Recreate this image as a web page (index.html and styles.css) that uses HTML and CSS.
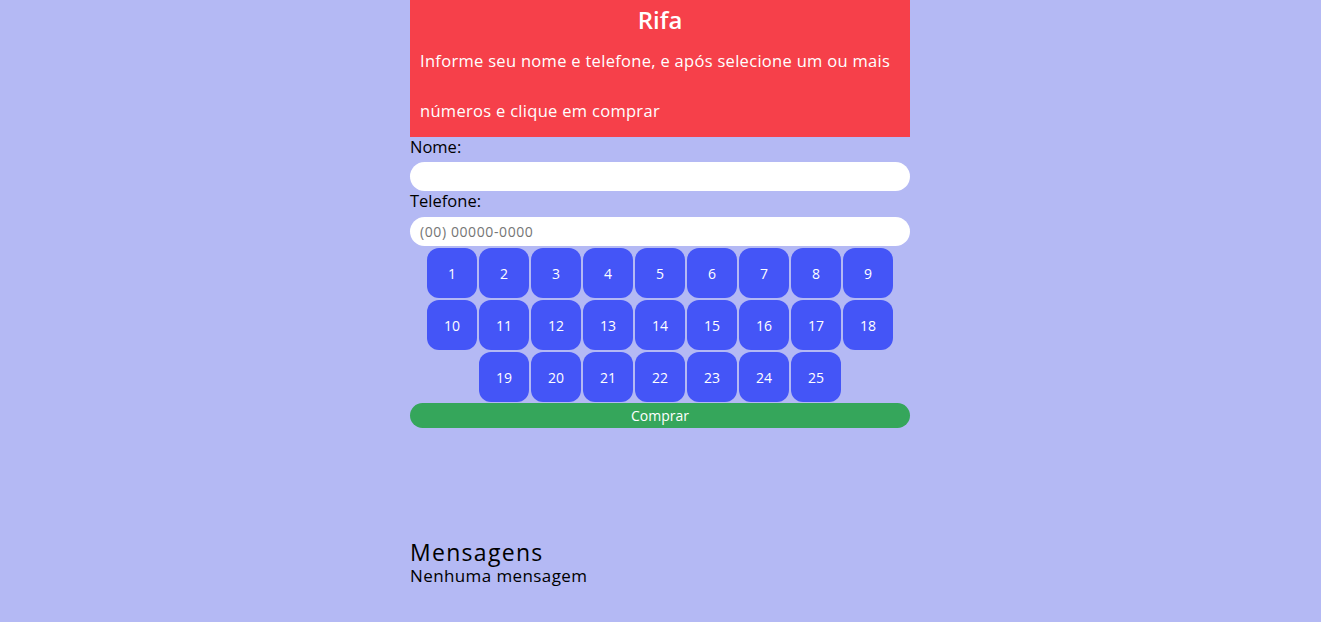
FILE: index.html
```html
<!DOCTYPE html>
<html lang="pt-BR">
<head>
<meta charset="utf-8">
<title>Rifa</title>
<link rel="stylesheet" href="styles.css">
</head>
<body>
<main class="container">
  <header class="header">
    <h1 class="title">Rifa</h1>
    <p class="intro">Informe seu nome e telefone, e após selecione um ou mais números e clique em comprar</p>
  </header>
  <form class="form">
    <label class="label" for="nome">Nome:</label>
    <input class="input" id="nome" type="text">
    <label class="label" for="tel">Telefone:</label>
    <input class="input" id="tel" type="text" placeholder="(00) 00000-0000">
    <div class="numbers">
      <button type="button" class="num">1</button>
      <button type="button" class="num">2</button>
      <button type="button" class="num">3</button>
      <button type="button" class="num">4</button>
      <button type="button" class="num">5</button>
      <button type="button" class="num">6</button>
      <button type="button" class="num">7</button>
      <button type="button" class="num">8</button>
      <button type="button" class="num">9</button>
      <button type="button" class="num">10</button>
      <button type="button" class="num">11</button>
      <button type="button" class="num">12</button>
      <button type="button" class="num">13</button>
      <button type="button" class="num">14</button>
      <button type="button" class="num">15</button>
      <button type="button" class="num">16</button>
      <button type="button" class="num">17</button>
      <button type="button" class="num">18</button>
      <button type="button" class="num">19</button>
      <button type="button" class="num">20</button>
      <button type="button" class="num">21</button>
      <button type="button" class="num">22</button>
      <button type="button" class="num">23</button>
      <button type="button" class="num">24</button>
      <button type="button" class="num">25</button>
    </div>
    <button type="button" class="buy">Comprar</button>
  </form>
  <section class="messages">
    <h2 class="messages-title">Mensagens</h2>
    <p class="messages-empty">Nenhuma mensagem</p>
  </section>
</main>
</body>
</html>
```
FILE: styles.css
```css
* { box-sizing: border-box; }
html, body {
  margin: 0;
  padding: 0;
  background: #b4b9f4;
  font-family: "Open Sans", "Noto Sans", sans-serif;
  color: #000;
}
.container {
  width: 500px;
  margin-left: calc(50% - 250.5px);
}
.header {
  background: #f6404a;
  color: #fff;
  padding: 3px 10px 0;
  height: 137px;
}
.title {
  margin: 0;
  text-align: center;
  font-size: 24px;
  font-weight: 600;
  line-height: 33px;
}
.intro {
  margin: 0;
  font-size: 16.5px;
  letter-spacing: 0.3px;
  line-height: 50px;
}
.form {
  display: flex;
  flex-direction: column;
}
.label {
  font-size: 16.5px;
  line-height: 20px;
  height: 25px;
}
.input {
  height: 29px;
  border: none;
  border-radius: 15px;
  background: #fff;
  padding: 0 10px;
  font-family: inherit;
  font-size: 14px;
  outline: none;
}
#tel { margin-top: 1px; }
.input::placeholder { color: #757575; letter-spacing: 0.6px; }
.numbers {
  display: flex;
  flex-wrap: wrap;
  justify-content: center;
  padding: 1px 16px 0;
}
.num {
  width: 50px;
  height: 50px;
  margin: 1px;
  border: none;
  border-radius: 12px;
  background: #4455f7;
  color: #fff;
  font-family: inherit;
  font-size: 14px;
  font-weight: 500;
  padding: 0;
}
.buy {
  height: 25px;
  border: none;
  border-radius: 13px;
  background: #35a65b;
  color: #fff;
  font-family: inherit;
  font-size: 14px;
  padding: 0;
}
.messages {
  margin-top: 112px;
}
.messages-title {
  margin: 0;
  font-size: 23px;
  font-weight: 400;
  letter-spacing: 1.3px;
  line-height: 25px;
}
.messages-empty {
  margin: 0;
  font-size: 17px;
  letter-spacing: 0.4px;
  line-height: 21px;
}
```
